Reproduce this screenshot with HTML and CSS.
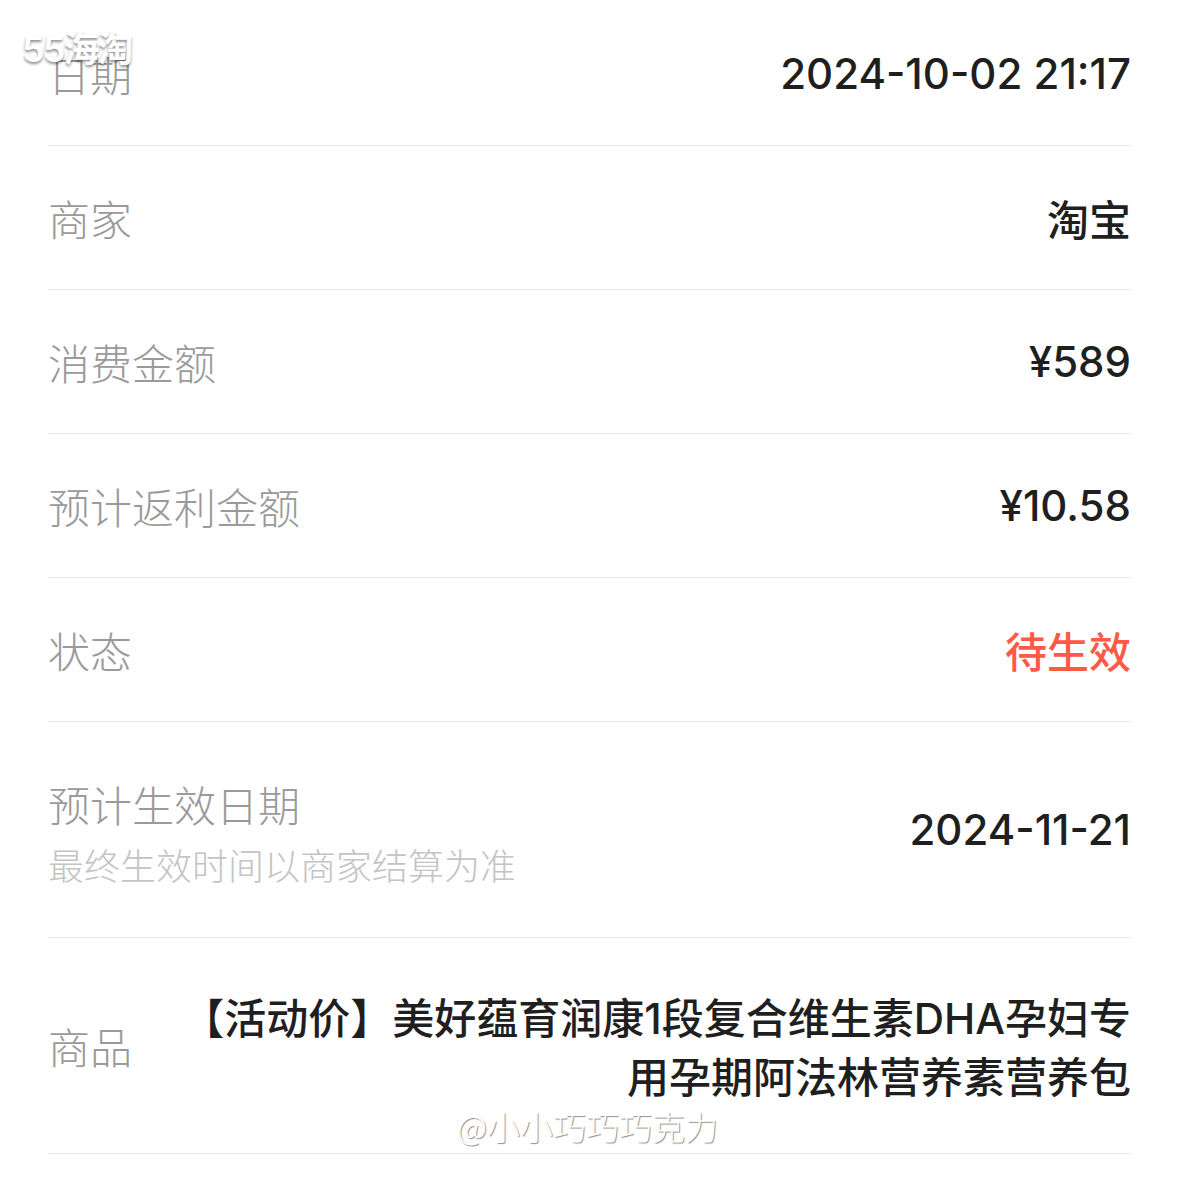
FILE: index.html
```html
<!DOCTYPE html>
<html lang="zh-CN">
<head>
    <meta charset="UTF-8">
    <meta name="viewport" content="width=device-width, initial-scale=1.0">
    <title>订单详情</title>
    <link rel="stylesheet" href="styles.css">
</head>
<body>

    <div class="detail-list">
        <div class="row">
            <span class="label">日期</span>
            <span class="value">2024-10-02 21:17</span>
        </div>
        <div class="row">
            <span class="label">商家</span>
            <span class="value">淘宝</span>
        </div>
        <div class="row">
            <span class="label">消费金额</span>
            <span class="value">¥589</span>
        </div>
        <div class="row">
            <span class="label">预计返利金额</span>
            <span class="value">¥10.58</span>
        </div>
        <div class="row">
            <span class="label">状态</span>
            <span class="value pending">待生效</span>
        </div>
        <div class="row tall">
            <div class="label-group">
                <span class="label">预计生效日期</span>
                <span class="sub-label">最终生效时间以商家结算为准</span>
            </div>
            <span class="value">2024-11-21</span>
        </div>
        <div class="row tall">
            <span class="label">商品</span>
            <span class="value product">【活动价】美好蕴育润康1段复合维生素DHA孕妇专用孕期阿法林营养素营养包</span>
        </div>
    </div>

    <div class="mark-site">55海淘</div>
    <div class="mark-user">@小小巧巧巧克力</div>

</body>
</html>
```

FILE: styles.css
```css
body {
    margin: 0;
    background-color: #ffffff;
    font-family: Inter, "Noto Sans CJK SC", sans-serif;
}
.detail-list {
    padding: 2px 48px 0 48px;
}
.row {
    display: flex;
    justify-content: space-between;
    align-items: center;
    height: 144px;
    box-sizing: border-box;
    border-bottom: 1px solid #e8e8e8;
}
.row.tall {
    height: 216px;
}
.label {
    font-size: 42px;
    color: #9a9a9a;
    font-family: "Noto Sans CJK SC", sans-serif;
    font-weight: 300;
}
.label-group {
    display: flex;
    flex-direction: column;
    gap: 4px;
    margin-top: 4px;
}
.sub-label {
    font-size: 36px;
    color: #c4c4c4;
    font-family: "Noto Sans CJK SC", sans-serif;
    font-weight: 300;
}
.value {
    font-size: 42px;
    font-weight: 500;
    color: #1f1f1f;
    text-align: right;
}
.pending {
    color: #ff5a45;
}
.product {
    max-width: 950px;
    font-size: 42px;
    line-height: 59px;
    margin-top: 4px;
}
.mark-site {
    position: absolute;
    left: 22px;
    top: 20px;
    font-size: 36px;
    font-weight: 600;
    color: #ffffff;
    letter-spacing: -2px;
    font-family: Inter, "Noto Sans CJK SC", sans-serif;
    text-shadow: 0 2px 3px rgba(0, 0, 0, 0.45);
}
.mark-user {
    position: absolute;
    left: 457px;
    top: 1102px;
    font-size: 33px;
    font-weight: 300;
    color: #ffffff;
    font-family: "Noto Sans CJK SC", sans-serif;
    text-shadow: 1px 1px 1px rgba(0, 0, 0, 0.45);
}
```
